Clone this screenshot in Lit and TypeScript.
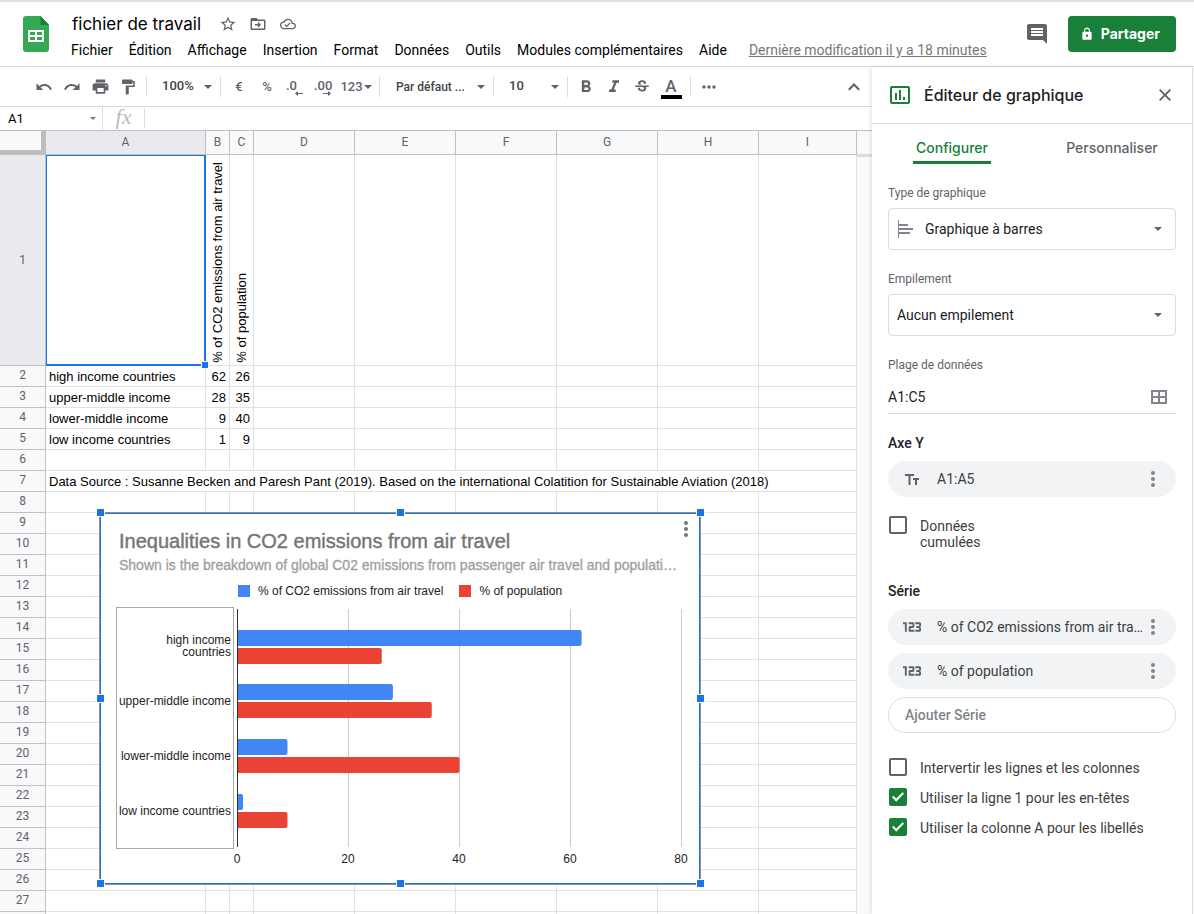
import { LitElement, html, svg, css, nothing } from "lit";
import { customElement, state } from "lit/decorators.js";
import { classMap } from "lit/directives/class-map.js";

const icon = (w: number, h: number, body: unknown, box = `0 0 ${w} ${h}`) =>
  html`<svg width=${w} height=${h} viewBox=${box} fill="currentColor" aria-hidden="true">${body}</svg>`;

const icons = {
  logo: svg`<path fill="#34a853" d="M3 0h14.500l8.500 9v24a3 3 0 0 1-3 3H3a3 3 0 0 1-3-3V3a3 3 0 0 1 3-3z"/>
    <path fill="#188038" d="M17.500 0l8.500 9h-8.500z"/>
    <path fill="#fff" fill-rule="evenodd" d="M5 14h16v12H5zM7 16v3h5v-3zM14 16v3h5v-3zM7 21v3h5v-3zM14 21v3h5v-3z"/>`,
  star: svg`<path d="M22 9.240l-7.190-.620L12 2 9.190 8.630 2 9.240l5.460 4.730L5.820 21 12 17.270 18.180 21l-1.630-7.030L22 9.240zM12 15.400l-3.760 2.270 1-4.280-3.320-2.880 4.380-.380L12 6.100l1.710 4.040 4.380.380-3.320 2.880 1 4.280L12 15.400z"/>`,
  folder: svg`<path d="M20 6h-8l-2-2H4c-1.100 0-2 .9-2 2v12c0 1.100.9 2 2 2h16c1.100 0 2-.9 2-2V8c0-1.100-.9-2-2-2zm0 12H4V8h16v10zm-8-1l4-4-4-4v3H8v2h4v3z"/>`,
  cloud: svg`<path d="M19.350 10.040C18.670 6.590 15.640 4 12 4 9.110 4 6.610 5.640 5.360 8.040 2.350 8.360 0 10.900 0 14c0 3.310 2.690 6 6 6h13c2.760 0 5-2.240 5-5 0-2.640-2.050-4.780-4.650-4.960zM19 18H6c-2.210 0-4-1.790-4-4 0-2.050 1.530-3.760 3.560-3.970l1.070-.110.5-.950C8.080 7.140 9.940 6 12 6c2.620 0 4.880 1.860 5.390 4.430l.3 1.500 1.530.110c1.560.1 2.780 1.410 2.780 2.960 0 1.650-1.350 3-3 3zm-9-3.820l-2.090-2.090L6.500 13.500 10 17l6.010-6.010-1.410-1.410z"/>`,
  comment: svg`<path d="M21.990 4c0-1.100-.890-2-1.990-2H4c-1.100 0-2 .9-2 2v12c0 1.100.9 2 2 2h14l4 4-.010-18zM18 14H6v-2h12v2zm0-3H6V9h12v2zm0-3H6V6h12v2z"/>`,
  lock: svg`<path d="M18 8h-1V6c0-2.760-2.240-5-5-5S7 3.240 7 6v2H6c-1.100 0-2 .9-2 2v10c0 1.100.9 2 2 2h12c1.100 0 2-.9 2-2V10c0-1.100-.9-2-2-2zm-6 9c-1.100 0-2-.9-2-2s.9-2 2-2 2 .9 2 2-.9 2-2 2zm3.100-9H8.900V6c0-1.710 1.390-3.100 3.100-3.100s3.100 1.390 3.100 3.100v2z"/>`,
  undo: svg`<path d="M12.500 8c-2.650 0-5.050.990-6.900 2.600L2 7v9h9l-3.620-3.620c1.390-1.160 3.160-1.880 5.120-1.880 3.540 0 6.550 2.310 7.600 5.500l2.370-.780C21.080 11.030 17.150 8 12.500 8z"/>`,
  redo: svg`<path d="M18.400 10.600C16.550 8.990 14.150 8 11.500 8c-4.650 0-8.580 3.030-9.960 7.220L3.900 16c1.050-3.190 4.050-5.500 7.600-5.500 1.950 0 3.730.720 5.120 1.880L13 16h9V7l-3.600 3.600z"/>`,
  print: svg`<path d="M19 8H5c-1.660 0-3 1.340-3 3v6h4v4h12v-4h4v-6c0-1.660-1.340-3-3-3zm-3 11H8v-5h8v5zm3-7c-.550 0-1-.450-1-1s.450-1 1-1 1 .450 1 1-.450 1-1 1zm-1-9H6v4h12V3z"/>`,
  paint: svg`<path d="M18 4V3c0-.550-.450-1-1-1H5c-.550 0-1 .450-1 1v4c0 .550.450 1 1 1h12c.550 0 1-.450 1-1V6h1v4H9v11c0 .550.450 1 1 1h2c.550 0 1-.450 1-1v-9h8V4h-3z"/>`,
  bold: svg`<path d="M15.600 10.790c.970-.670 1.650-1.770 1.650-2.790 0-2.260-1.750-4-4-4H7v14h7.040c2.090 0 3.710-1.700 3.710-3.790 0-1.520-.860-2.820-2.150-3.420zM10 6.500h3c.830 0 1.500.670 1.500 1.500s-.670 1.500-1.500 1.500h-3v-3zm3.500 9H10v-3h3.500c.830 0 1.500.670 1.500 1.500s-.670 1.500-1.500 1.500z"/>`,
  italic: svg`<path d="M10 4v3h2.210l-3.420 8H6v3h8v-3h-2.210l3.420-8H18V4z"/>`,
  strike: svg`<path d="M7.240 8.750c-.260-.480-.390-1.030-.390-1.670 0-.610.130-1.160.4-1.670.260-.5.630-.930 1.110-1.290.480-.350 1.050-.630 1.700-.830.660-.190 1.390-.290 2.180-.290.810 0 1.540.110 2.210.340.660.220 1.230.540 1.690.940.470.4.830.880 1.080 1.430.250.550.380 1.150.380 1.810h-3.010c0-.310-.050-.590-.150-.850-.090-.270-.240-.490-.440-.680-.2-.190-.450-.330-.750-.440-.3-.1-.660-.160-1.060-.160-.390 0-.740.040-1.030.130-.290.090-.530.210-.720.360-.190.160-.340.340-.440.550-.1.210-.150.430-.150.660 0 .480.250.880.740 1.210.380.250.770.480 1.410.7H7.390c-.050-.080-.110-.170-.150-.250zM21 12v-2H3v2h9.620c.180.070.4.140.550.2.370.170.660.340.870.510.210.170.350.360.430.570.070.2.110.430.110.690 0 .230-.050.450-.140.660-.090.2-.230.380-.420.530-.190.150-.420.260-.710.350-.290.080-.630.130-1.010.130-.430 0-.830-.040-1.180-.130s-.660-.230-.910-.420c-.250-.190-.450-.440-.590-.750-.140-.310-.250-.760-.250-1.210H6.400c0 .550.080 1.130.240 1.580.160.450.370.850.650 1.210.280.350.6.660.980.920.370.260.780.480 1.220.650.440.170.9.300 1.380.390.480.080.960.130 1.440.130.8 0 1.530-.090 2.180-.280s1.210-.450 1.670-.790c.460-.340.820-.770 1.070-1.270s.380-1.070.380-1.710c0-.6-.1-1.140-.310-1.610-.050-.110-.110-.230-.170-.330H21z"/>`,
  more: svg`<circle cx="2" cy="2" r="1.700"/><circle cx="7" cy="2" r="1.700"/><circle cx="12" cy="2" r="1.700"/>`,
  chevron: svg`<path d="M6 0l6 6-1.500 1.500L6 3 1.500 7.500 0 6z"/>`,
  close: svg`<path d="M0 1.300L1.300 0 6 4.700 10.700 0 12 1.300 7.300 6l4.700 4.700-1.300 1.300L6 7.300 1.300 12 0 10.700 4.700 6z"/>`,
  caret: svg`<path d="M0 0h8L4 4z"/>`,
  smallCaret: svg`<path d="M0 0h6L3 3z"/>`,
  chart: svg`<path fill-rule="evenodd" d="M2 0h16a2 2 0 0 1 2 2v14a2 2 0 0 1-2 2H2a2 2 0 0 1-2-2V2a2 2 0 0 1 2-2zM2 2v14h16V2zM5 7h2v7H5zM9 4h2v10H9zM13 11h2v3h-2z"/>`,
  barType: svg`<path d="M0 0h1v18H0zM1 4h9v2H1zM1 8h14v2H1zM1 12h11v2H1z"/>`,
  range: svg`<path fill-rule="evenodd" d="M0 0h16v14H0zM2 2v4h5V2zM9 2v4h5V2zM2 8v4h5V8zM9 8v4h5V8z"/>`,
  dots: svg`<circle cx="2" cy="2" r="2"/><circle cx="2" cy="8" r="2"/><circle cx="2" cy="14" r="2"/>`,
  textType: svg`<path d="M0 0h9v2H5.500v9h-2V2H0zM8 4h6v2h-2v5h-2V6H8z"/>`,
  numberType: svg`<path d="M0 0h4v10H2V2H0zM6 0h5l1 1v3.500L11 6H8v2h4v2H6V5l1-1h3V2H6zM13 0h5l1 1v3l-1 1 1 1v3l-1 1h-5V8h4V6h-3V4h3V2h-4z"/>`,
  decLeft: svg`<path d="M0 2.500L3 0v2h5v1H3v2z"/>`,
  decRight: svg`<path d="M8 2.500L5 0v2H0v1h5v2z"/>`,
};

interface Datum { label: string; lines: string[]; emissions: number; population: number; }

const SERIES = ["% of CO2 emissions from air travel", "% of population"];
const DATA: Datum[] = [
  { label: "high income countries", lines: ["high income", "countries"], emissions: 62, population: 26 },
  { label: "upper-middle income", lines: ["upper-middle income"], emissions: 28, population: 35 },
  { label: "lower-middle income", lines: ["lower-middle income"], emissions: 9, population: 40 },
  { label: "low income countries", lines: ["low income countries"], emissions: 1, population: 9 },
];
const COLUMNS = ["A", "B", "C", "D", "E", "F", "G", "H", "I"];
const SOURCE = "Data Source : Susanne Becken and Paresh Pant (2019). Based on the international Colatition for Sustainable Aviation (2018)";

@customElement("app-header")
class AppHeader extends LitElement {
  static styles = css`
    :host { display: block; font-family: Roboto, sans-serif; }
    .bar { display: flex; align-items: flex-start; padding: 14px 18px 0 23px; height: 66px; box-sizing: border-box;
      border-top: 2px solid #e0e0e0; }
    .info { flex: 1; margin-left: 14px; min-width: 0; }
    .title-row { display: flex; align-items: center; height: 24px; margin-top: -4px; }
    h1 { margin: 0 12px 0 0; padding: 0 0 0 9px; font: 400 17px/24px Inter, Roboto, sans-serif; color: #000; }
    .mini { display: flex; align-items: center; justify-content: center; width: 30px; height: 24px; color: #5f6368; }
    button { border: 0; background: none; padding: 0; margin: 0; font: inherit; color: inherit; }
    svg { display: block; }
    nav { display: flex; align-items: center; height: 24px; margin-top: 2px; font-size: 14px; line-height: 24px; white-space: nowrap; }
    .menu { padding: 0 8px; color: #000; }
    .edited { margin-left: 14px; color: #777; text-decoration: underline; }
    .comment { color: #5f6368; margin: 7px 20px 0 0; }
    .share { display: flex; align-items: center; gap: 8px; height: 36px; padding: 0 16px 0 13px; border-radius: 4px;
      background: #188038; color: #fff; font: 700 14px/20px Inter, Roboto, sans-serif; }
  `;
  render() {
    const menus = ["Fichier", "Édition", "Affichage", "Insertion", "Format", "Données", "Outils", "Modules complémentaires", "Aide"];
    return html`<header class="bar">
      ${icon(26, 36, icons.logo)}
      <div class="info">
        <div class="title-row">
          <h1>fichier de travail</h1>
          <button class="mini" aria-label="Suivre">${icon(18, 18, icons.star, "0 0 24 24")}</button>
          <button class="mini" aria-label="Déplacer">${icon(18, 18, icons.folder, "0 0 24 24")}</button>
          <button class="mini" aria-label="État du document">${icon(16, 16, icons.cloud, "0 0 24 24")}</button>
        </div>
        <nav>
          ${menus.map((m) => html`<button class="menu">${m}</button>`)}
          <a class="edited" href="#">Dernière modification il y a 18 minutes</a>
        </nav>
      </div>
      <button class="comment" aria-label="Commentaires">${icon(22, 22, icons.comment, "1 1 22 22")}</button>
      <button class="share">${icon(12, 14, icons.lock, "2 0 20 24")}Partager</button>
    </header>`;
  }
}

@customElement("sheet-toolbar")
class SheetToolbar extends LitElement {
  static styles = css`
    :host { display: block; font-family: Roboto, sans-serif; }
    .tools { display: flex; align-items: center; height: 39px; padding: 0 4px 0 30px; border-bottom: 1px solid #dadce0; color: #444; font-size: 13px; }
    button { display: flex; align-items: center; justify-content: center; flex: none; box-sizing: border-box; width: 28px; height: 28px; padding: 0; border: 0;
      background: none; color: #5f6368; font: 500 13px/16px Roboto, sans-serif; }
    svg { display: block; }
    .sep { flex: none; width: 1px; height: 20px; margin: 0 4px; background: #dadce0; }
    .pick { position: relative; display: flex; align-items: center; flex: none; color: #5f6368; }
    .pick svg { position: absolute; right: 4px; pointer-events: none; }
    select { appearance: none; width: 65px; height: 28px; padding: 0 0 2px 11px; border: 0; background: none; color: #444;
      font: 500 13px/16px Roboto, sans-serif; }
    .font select { width: 105px; padding: 0 0 0 12px; font-size: 12px; }
    .decimal { flex-direction: column; align-items: flex-start; padding-left: 5px; }
    .decimal svg { margin: -3px 0 0 9px; }
    .formats { width: 38px; gap: 1px; }
    .color { width: 30px; }
    .swatch { display: flex; flex-direction: column; align-items: center; font-size: 17px; line-height: 17px; border-bottom: 4px solid #000; width: 21px; margin-top: 3px; }
    .fill { flex: 1; }
    .formula { display: flex; align-items: center; height: 23px; border-bottom: 1px solid #c0c0c0; }
    input { border: 0; outline: 0; padding: 0; background: none; min-width: 0; color: #000; font: 13px/16px Roboto, sans-serif; }
    .name { width: 75px; padding-left: 8px; }
    .open { width: 19px; height: 22px; color: #777; }
    .tall { flex: none; width: 1px; height: 23px; background: #dadce0; }
    .fx { width: 41px; height: 23px; text-align: center; color: #bbb; font: italic 22px/20px "Liberation Serif", serif; }
    .short { flex: none; width: 1px; height: 19px; background: #dadce0; }
    .value { flex: 1; padding-left: 8px; }
  `;
  private tool(name: string, body: unknown, size = 18) {
    return html`<button aria-label=${name}>${icon(size, size, body, "0 0 24 24")}</button>`;
  }
  render() {
    const caret = icon(8, 4, icons.caret);
    return html`<div class="tools" role="toolbar">
        ${this.tool("Annuler", icons.undo)}${this.tool("Rétablir", icons.redo)}
        ${this.tool("Imprimer", icons.print, 19)}${this.tool("Appliquer la mise en forme", icons.paint)}
        <span class="sep"></span>
        <span class="pick"><select aria-label="Zoom"><option>100%</option></select>${caret}</span>
        <span class="sep"></span>
        <button>€</button><button>%</button>
        <button class="decimal" aria-label="Réduire les décimales">.0${icon(8, 5, icons.decLeft)}</button>
        <button class="decimal" aria-label="Augmenter les décimales">.00${icon(8, 5, icons.decRight)}</button>
        <button class="formats">123${caret}</button>
        <span class="sep"></span>
        <span class="pick font"><select aria-label="Police"><option>Par défaut ...</option></select>${caret}</span>
        <span class="sep"></span>
        <span class="pick"><select aria-label="Taille"><option>10</option></select>${caret}</span>
        <span class="sep"></span>
        ${this.tool("Gras", icons.bold, 20)}${this.tool("Italique", icons.italic, 20)}${this.tool("Barré", icons.strike, 18)}
        <button class="color" aria-label="Couleur du texte"><span class="swatch">A</span></button>
        <span class="sep"></span>
        <button aria-label="Plus">${icon(14, 4, icons.more)}</button>
        <span class="fill"></span>
        <button aria-label="Masquer les menus">${icon(12, 8, icons.chevron)}</button>
      </div>
      <div class="formula">
        <input class="name" aria-label="Zone de nom" .value=${"A1"} />
        <button class="open" aria-label="Plages nommées">${icon(6, 3, icons.smallCaret)}</button>
        <span class="tall"></span><span class="fx">fx</span><span class="short"></span>
        <input class="value" aria-label="Formule" />
      </div>`;
  }
}

@customElement("bar-chart")
class BarChart extends LitElement {
  static styles = css`
    :host { display: block; font-family: "Liberation Sans", Arial, sans-serif; }
    figure { box-sizing: border-box; height: 373px; margin: 0; padding: 15px 18px 0 16px; background: #fff; border: 1px solid #8f8f8f; outline: 1px solid #1a73e8; outline-offset: -2px; }
    figcaption { padding-left: 3px; white-space: nowrap; }
    .title { color: #757575; font-size: 20px; line-height: 26px; -webkit-text-stroke: 0.4px #757575; }
    .sub { overflow: hidden; text-overflow: ellipsis; color: #9e9e9e; font-size: 14px; line-height: 22px; -webkit-text-stroke: 0.3px #9e9e9e; }
    .legend { display: flex; gap: 16px; height: 30px; padding-left: 122px; align-items: center; font-size: 12px; line-height: 16px; color: #222; }
    .key { display: flex; align-items: center; gap: 8px; }
    .chip { width: 12px; height: 12px; }
    .blue { background: #4285f4; }
    .red { background: #ea4335; }
    .plot { display: block; overflow: visible; margin-top: 1px; }
    text { font-size: 12px; fill: #222; }
    .menu { position: absolute; top: 3px; right: 3px; width: 24px; height: 28px; padding: 0; border: 0; background: none; color: #757575; }
    .menu svg { display: block; margin: auto; }
    .handle { position: absolute; width: 7px; height: 7px; margin: -5px; background: #1a73e8; border: 1px solid #fff; }
    .x0 { left: 2px; } .x1 { left: calc(50% + 1px); } .x2 { left: 100%; }
    .y0 { top: 1px; } .y1 { top: 50%; } .y2 { top: calc(100% - 1px); }
  `;
  private bar(value: number, top: number, fill: string) {
    const w = (value * 111) / 20;
    return svg`<path fill=${fill} d=${`M121.500 ${top}h${w - 2}a2 2 0 0 1 2 2v12a2 2 0 0 1-2 2h-${w - 2}z`}/>`;
  }
  render() {
    const tops = [23, 77, 132, 187];
    return html`<figure>
        <figcaption>
          <div class="title">Inequalities in CO2 emissions from air travel</div>
          <div class="sub">Shown is the breakdown of global C02 emissions from passenger air travel and populati…</div>
        </figcaption>
        <div class="legend">
          <span class="key"><i class="chip blue"></i>${SERIES[0]}</span>
          <span class="key"><i class="chip red"></i>${SERIES[1]}</span>
        </div>
        <svg class="plot" width="566" height="262" viewBox="0 0 566 262">
          ${[20, 40, 60, 80].map((v) => svg`<path stroke="#ccc" d=${`M${121.5 + v * 5.55} 2V240`}/>`)}
          <rect x="0.500" y="0.500" width="117" height="241" fill="none" stroke="#aaa"/>
          ${DATA.map((d, i) => svg`
            ${this.bar(d.emissions, tops[i], "#4285f4")}${this.bar(d.population, tops[i] + 18, "#ea4335")}
            ${d.lines.map((line, n) => svg`<text text-anchor="end" x="115" y=${tops[i] + 21 - (d.lines.length - 1) * 7 + n * 12}>${line}</text>`)}`)}
          <path stroke="#333" d="M121.500 2V240"/>
          ${[0, 20, 40, 60, 80].map((v) => svg`<text text-anchor="middle" x=${121 + v * 5.55} y="256">${v}</text>`)}
        </svg>
      </figure>
      <button class="menu" aria-label="Options du graphique">${icon(4, 16, icons.dots)}</button>
      ${[0, 1, 2].map((x) => [0, 1, 2].map((y) => (x === 1 && y === 1 ? nothing : html`<span class="handle x${x} y${y}"></span>`)))}`;
  }
}

@customElement("sheet-grid")
class SheetGrid extends LitElement {
  static styles = css`
    :host { display: block; position: relative; overflow: hidden; background: #f8f9fa; }
    .sheet { margin-right: 15px; background: #fff; }
    table { width: 100%; table-layout: fixed; border-collapse: separate; border-spacing: 0; }
    th, td { box-sizing: border-box; padding: 0; overflow: hidden; white-space: nowrap; }
    th { height: 21px; border-right: 1px solid #c0c0c0; border-bottom: 1px solid #c0c0c0; background: #f8f9fa; color: #5f6368;
      font: 400 12px/18px Roboto, sans-serif; text-align: center; vertical-align: top; }
    thead th { height: 24px; line-height: 22px; }
    thead .corner { border-right: 5px solid #bdbdbd; border-bottom: 5px solid #bdbdbd; }
    th.on { background: #e8eaed; }
    td { height: 21px; padding: 1px 3px 0; border-right: 1px solid #e1e1e1; border-bottom: 1px solid #e1e1e1; color: #000;
      font: 13px/19px "Liberation Sans", Arial, sans-serif; }
    .num { text-align: right; }
    .first th, .first td { height: 211px; vertical-align: middle; }
    .first td.turned { vertical-align: bottom; padding: 0 0 2px; }
    .turned span { display: block; width: 23px; line-height: 23px; writing-mode: vertical-rl; transform: rotate(180deg); }
    td.active { position: relative; overflow: visible; }
    .active::before { content: ""; position: absolute; inset: 0 -1px -1px 0; border: solid #1a73e8; border-width: 1px 2px 2px 1px; }
    .active::after { content: ""; position: absolute; right: -3px; bottom: -3px; width: 6px; height: 6px; border: 1px solid #fff; border-width: 1px 0 0 1px; background: #1a73e8; }
    .chart { position: absolute; left: 99px; top: 381px; width: 602px; }
    .row-head { width: 46px; } .wide { width: 160px; } .narrow { width: 24px; } .normal { width: 101px; }
    .end { position: absolute; top: 0; right: 0; width: 15px; height: 23px; border-bottom: 3px solid #dadce0; }
  `;
  private cells(row: number) {
    const d = DATA[row - 2];
    if (row === 7) return html`<td colspan="9">${SOURCE}</td>`;
    return COLUMNS.map((_, i) =>
      d && i === 0 ? html`<td>${d.label}</td>`
      : d && i === 1 ? html`<td class="num">${d.emissions}</td>`
      : d && i === 2 ? html`<td class="num">${d.population}</td>`
      : html`<td></td>`);
  }
  render() {
    const rows = Array.from({ length: 26 }, (_, i) => i + 2);
    return html`<div class="sheet"><table>
        <colgroup><col class="row-head"><col class="wide"><col class="narrow"><col class="narrow">
          ${[0, 1, 2, 3, 4].map(() => html`<col class="normal">`)}<col></colgroup>
        <thead><tr><th class="corner"></th>${COLUMNS.map((c, i) => html`<th scope="col" class=${classMap({ on: i === 0 })}>${c}</th>`)}</tr></thead>
        <tbody>
          <tr class="first"><th scope="row" class="on">1</th><td class="active"></td>
            ${SERIES.map((s) => html`<td class="turned"><span>${s}</span></td>`)}
            ${COLUMNS.slice(3).map(() => html`<td></td>`)}</tr>
          ${rows.map((r) => html`<tr><th scope="row">${r}</th>${this.cells(r)}</tr>`)}
          <tr><th></th>${COLUMNS.map(() => html`<td></td>`)}</tr>
        </tbody></table></div>
      <div class="end"></div>
      <bar-chart class="chart"></bar-chart>`;
  }
}

@customElement("chart-editor")
class ChartEditor extends LitElement {
  @state() private tab = 0;
  static styles = css`
    :host { display: block; box-sizing: border-box; background: #fff; font-family: Roboto, sans-serif; color: #202124; border-right: 1px solid #dadce0;
      box-shadow: -1px 0 4px rgba(60, 64, 67, 0.15); }
    button { padding: 0; border: 0; background: none; font: inherit; color: inherit; }
    svg { display: block; flex: none; }
    .head { display: flex; align-items: center; height: 56px; padding: 0 21px 0 18px; border-bottom: 1px solid #dadce0; color: #188038; }
    h2 { flex: 1; margin: 0 0 0 14px; font: 500 16px/24px Inter, Roboto, sans-serif; color: #202124; }
    .close { color: #5f6368; }
    .tabs { display: grid; grid-template-columns: 1fr 1fr; justify-items: center; }
    .tab { height: 40px; padding: 10px 3px 0; box-sizing: border-box; border-bottom: 3px solid transparent; color: #5f6368; font: 500 14px/20px Inter, Roboto, sans-serif; }
    .tab.on { color: #188038; border-color: #188038; }
    .body { padding: 20px 16px; font-size: 14px; line-height: 20px; }
    .label { display: block; margin-bottom: 6px; font-size: 12px; line-height: 18px; color: #5f6368; }
    .box { position: relative; display: flex; align-items: center; height: 42px; margin-bottom: 20px; }
    .lead, .arrow { position: absolute; pointer-events: none; }
    .lead { left: 10px; color: #80868b; }
    .arrow { right: 14px; color: #5f6368; }
    select { appearance: none; width: 100%; height: 42px; padding: 0 24px 0 8px; border: 1px solid #dadce0; border-radius: 4px; background: none; color: #202124; font: 14px/20px Roboto, sans-serif; }
    .with-icon select { padding-left: 36px; }
    .range { display: flex; align-items: center; height: 33px; padding-right: 9px; margin-bottom: 19px; border-bottom: 1px solid #dadce0; color: #80868b; }
    .range input { flex: 1; min-width: 0; padding: 0; border: 0; outline: 0; color: #202124; font: 14px/20px Roboto, sans-serif; }
    h3 { margin: 0 0 8px; font: 500 14px/20px Roboto, sans-serif; color: #202124; }
    .pill { display: flex; align-items: center; height: 36px; margin-bottom: 8px; padding: 0 21px 0 15px; border-radius: 18px; background: #f1f3f4; color: #3c4043; }
    .kind { display: flex; justify-content: center; width: 18px; margin-right: 16px; color: #5f6368; }
    .text { flex: 1; min-width: 0; overflow: hidden; text-overflow: ellipsis; white-space: nowrap; }
    .dots { margin-left: 8px; color: #80868b; }
    .add { box-sizing: border-box; display: block; width: 100%; height: 36px; padding-left: 16px; border: 1px solid #dadce0; border-radius: 18px; text-align: left; font-weight: 500; color: #80868b; }
    .check { display: flex; align-items: flex-start; gap: 13px; margin-bottom: 10px; color: #3c4043; }
    .check.two { width: 120px; margin: 19px 0 31px; line-height: 16px; }
    .two span { padding-top: 2px; }
    .checks { padding-top: 25px; }
    .check input { appearance: none; flex: none; display: flex; justify-content: center; box-sizing: border-box; width: 18px; height: 18px; margin: 0 0 0 1px; border: 2px solid #5f6368; border-radius: 2px; }
    .check input:checked { background: #188038; border-color: #188038; }
    .check input:checked::before { content: ""; width: 4px; height: 9px; border: solid #fff; border-width: 0 2px 2px 0; transform: rotate(45deg); }
  `;
  private pill(kind: unknown, text: string) {
    return html`<div class="pill"><span class="kind">${kind}</span><span class="text">${text}</span>
      <button class="dots" aria-label="Options">${icon(4, 16, icons.dots)}</button></div>`;
  }
  render() {
    const number = icon(18, 10, icons.numberType, "0 0 19 10");
    const arrow = html`<span class="arrow">${icon(8, 4, icons.caret)}</span>`;
    return html`
      <div class="head">${icon(20, 18, icons.chart)}<h2>Éditeur de graphique</h2>
        <button class="close" aria-label="Fermer">${icon(12, 12, icons.close)}</button></div>
      <div class="tabs" role="tablist">
        ${["Configurer", "Personnaliser"].map((t, i) => html`<button role="tab" class=${classMap({ tab: true, on: this.tab === i })} @click=${() => (this.tab = i)}>${t}</button>`)}
      </div>
      <div class="body">
        <label class="label" for="type">Type de graphique</label>
        <div class="box with-icon"><span class="lead">${icon(15, 18, icons.barType)}</span>
          <select id="type"><option>Graphique à barres</option></select>${arrow}</div>
        <label class="label" for="stack">Empilement</label>
        <div class="box"><select id="stack"><option>Aucun empilement</option></select>${arrow}</div>
        <label class="label" for="range">Plage de données</label>
        <div class="range"><input id="range" .value=${"A1:C5"} />
          <button aria-label="Sélectionner une plage de données">${icon(16, 14, icons.range)}</button></div>
        <h3>Axe Y</h3>
        ${this.pill(icon(14, 11, icons.textType), "A1:A5")}
        <label class="check two"><input type="checkbox" /><span>Données cumulées</span></label>
        <h3>Série</h3>
        ${SERIES.map((s) => this.pill(number, s))}
        <button class="add">Ajouter Série</button>
        <div class="checks">
          <label class="check"><input type="checkbox" />Intervertir les lignes et les colonnes</label>
          <label class="check"><input type="checkbox" checked />Utiliser la ligne 1 pour les en-têtes</label>
          <label class="check"><input type="checkbox" checked />Utiliser la colonne A pour les libellés</label>
        </div>
      </div>`;
  }
}

@customElement("app-root")
class AppRoot extends LitElement {
  static styles = css`
    :host { display: flex; flex-direction: column; height: 100vh; overflow: hidden; background: #fff; }
    .top { flex: none; border-bottom: 1px solid #dadce0; }
    .work { flex: 1; display: flex; min-height: 0; padding-right: 1px; }
    .main { flex: 1; min-width: 0; display: flex; flex-direction: column; }
    .grid { flex: 1; min-height: 0; }
    .editor { position: relative; flex: none; width: 321px; }
  `;
  render() {
    return html`<app-header class="top"></app-header>
      <div class="work">
        <main class="main"><sheet-toolbar></sheet-toolbar><sheet-grid class="grid"></sheet-grid></main>
        <chart-editor class="editor"></chart-editor>
      </div>`;
  }
}
